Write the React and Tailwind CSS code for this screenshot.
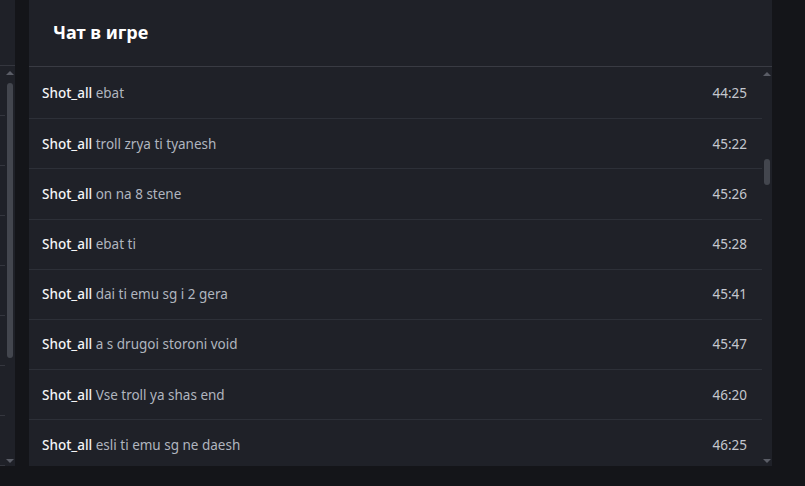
import React from 'react';

const messages = [
    { text: 'ebat', time: '44:25' },
    { text: 'troll zrya ti tyanesh', time: '45:22' },
    { text: 'on na 8 stene', time: '45:26' },
    { text: 'ebat ti', time: '45:28' },
    { text: 'dai ti emu sg i 2 gera', time: '45:41' },
    { text: 'a s drugoi storoni void', time: '45:47' },
    { text: 'Vse troll ya shas end', time: '46:20' },
    { text: 'esli ti emu sg ne daesh', time: '46:25' },
];

const ArrowUp = () => (
    <div className="h-0 w-0 border-x-[4px] border-b-[4px] border-x-transparent border-b-[#5a5d66]" />
);

const ArrowDown = () => (
    <div className="h-0 w-0 border-x-[4px] border-t-[4px] border-x-transparent border-t-[#5a5d66]" />
);

// thin scrollbar, thumb placed by top offset / height
const ScrollBar = ({ thumbTop, thumbHeight }) => (
    <div className="flex h-full w-[10px] shrink-0 flex-col items-center bg-[#1f2128] pt-[5px] pb-[3px]">
        <ArrowUp />
        <div className="relative w-full flex-1">
            <div
                className="absolute left-[2px] w-[6px] rounded-full bg-[#43464e]"
                style={{ top: thumbTop, height: thumbHeight }}
            />
        </div>
        <ArrowDown />
    </div>
);

export default function App() {
    return (
        <div className="flex h-[486px] w-[805px] overflow-hidden bg-[#141519]" style={{ fontFamily: '"Noto Sans", "Open Sans", sans-serif' }}>
            {/* background panel behind the modal */}
            <div className="flex h-[466px] w-[15px] shrink-0 flex-col bg-[#1f2128]">
                <div className="h-[66px] shrink-0 border-b border-[#34363e]" />
                <div className="flex flex-1">
                    <div className="flex w-[5px] flex-col">
                        {[0, 1, 2, 3, 4, 5, 6, 7].map(i => (
                            <div key={i} className="h-[50px] shrink-0 border-b border-[#34363e]" />
                        ))}
                    </div>
                    <ScrollBar thumbTop={8} thumbHeight={275} />
                </div>
            </div>

            {/* chat modal */}
            <div className="ml-[14px] flex h-[466px] w-[743px] shrink-0 flex-col bg-[#1f2128]">
                <div className="flex h-[67px] shrink-0 items-center border-b border-[#393b43] px-[24px] pb-[1px]">
                    <h2 className="text-[18px] font-bold text-white">Чат в игре</h2>
                </div>
                <div className="flex min-h-0 flex-1">
                    <div className="flex-1 overflow-hidden pt-[2px]">
                        {messages.map((m, i) => (
                            <div
                                key={i}
                                className={`flex h-[50.2px] items-center justify-between pl-[13px] pr-[15px] text-[13.5px] ${i < messages.length - 1 ? 'border-b border-[#2d3038]' : ''}`}
                            >
                                <p className="text-[#b0b5bf]">
                                    <span className="font-medium text-[#f4f5f7]">Shot_all</span> {m.text}
                                </p>
                                <span className="text-[#c4c7ce]">{m.time}</span>
                            </div>
                        ))}
                    </div>
                    <ScrollBar thumbTop={83} thumbHeight={26} />
                </div>
            </div>
        </div>
    );
}
